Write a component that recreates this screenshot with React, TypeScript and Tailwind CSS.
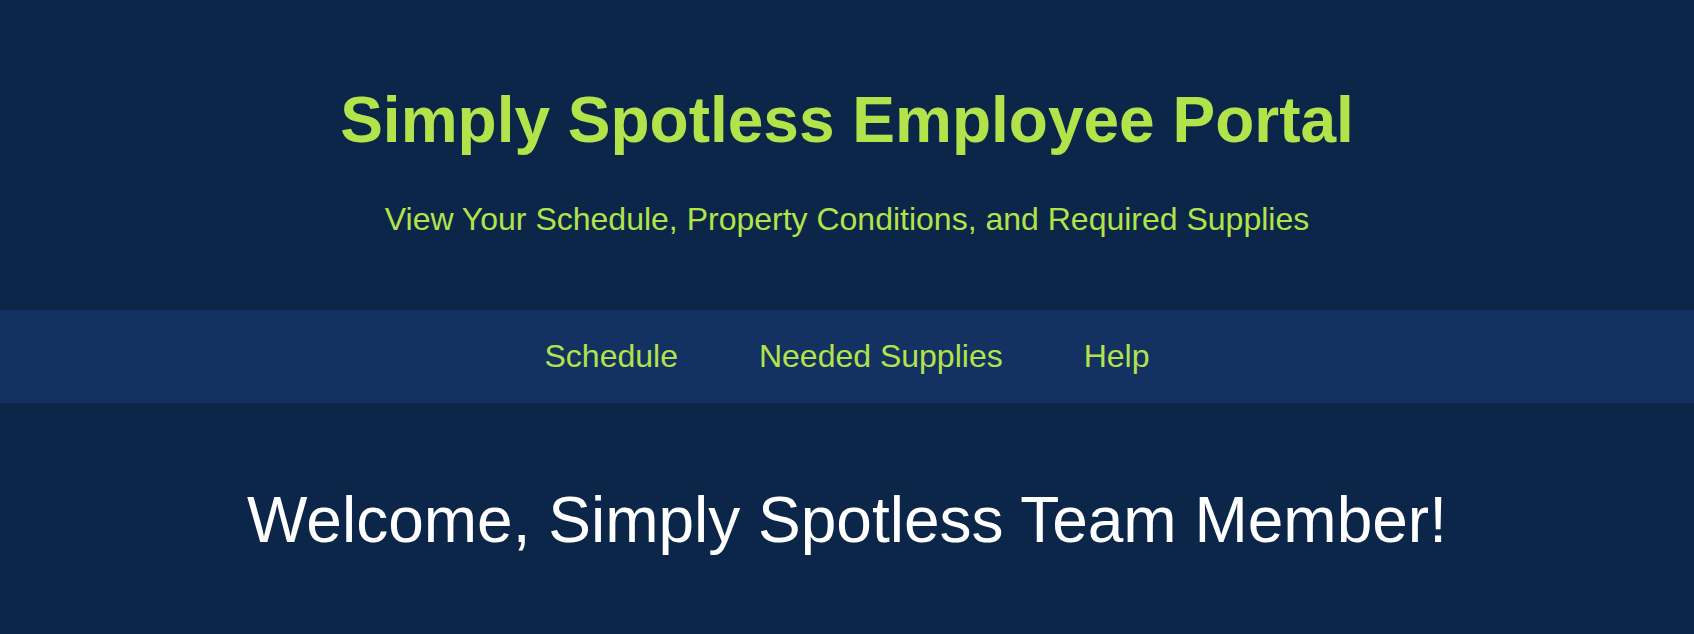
export default function App() {
  const links = ["Schedule", "Needed Supplies", "Help"];

  return (
    <div className="min-h-[634px] bg-[#0c264a] font-['Liberation_Sans',Arial,sans-serif]">
      <header className="pt-[83px] pb-[72px] text-center">
        <h1 className="text-[64px] leading-[74px] font-bold text-[#b3e34b]">
          Simply Spotless Employee Portal
        </h1>
        <p className="mt-[44px] text-[32px] leading-[37px] text-[#b3e34b]">
          View Your Schedule, Property Conditions, and Required Supplies
        </p>
      </header>

      <nav className="bg-[#133262] py-[28px]">
        <ul className="flex justify-center gap-[81px]">
          {links.map((link) => (
            <li key={link}>
              <a href="#" className="text-[32px] leading-[37px] text-[#b3e34b]">
                {link}
              </a>
            </li>
          ))}
        </ul>
      </nav>

      <main className="pt-[80px] text-center">
        <h2 className="text-[64px] leading-[74px] text-white">
          Welcome, Simply Spotless Team Member!
        </h2>
      </main>
    </div>
  );
}
